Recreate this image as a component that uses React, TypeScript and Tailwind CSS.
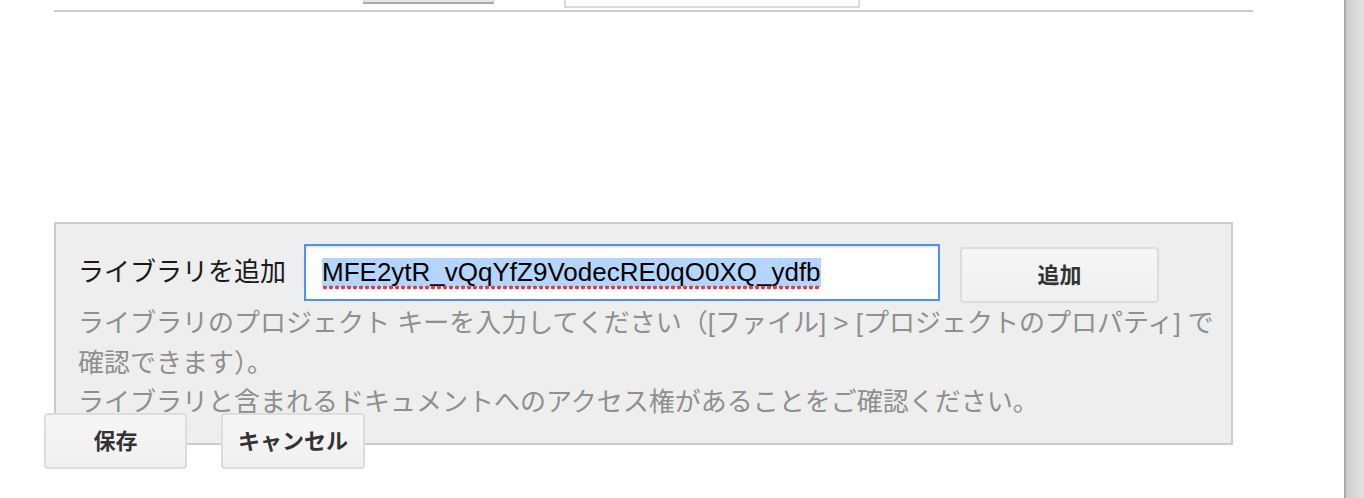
const FONT = { fontFamily: '"Liberation Sans", "Noto Sans CJK JP", sans-serif' }

function DialogButton({ label, className = '' }: { label: string; className?: string }) {
  return (
    <button
      type="button"
      className={`flex h-[56px] shrink-0 items-center justify-center rounded-[4px] border-2 border-[#dcdcdc] bg-gradient-to-b from-[#f6f6f6] to-[#f0f0f0] text-[22px] font-bold text-[#333] ${className}`}
    >
      {label}
    </button>
  )
}

export default function App() {
  return (
    <div className="flex h-[498px] w-[1364px] overflow-hidden bg-white" style={FONT}>
      <div className="flex min-w-0 flex-1 flex-col">
        {/* cut-off controls from the section above */}
        <div className="flex h-[8px] items-start pl-[363px]">
          <div className="h-[4px] w-[131px] border-x border-b-2 border-x-[#cfcfcf] border-b-[#a9a9a9] bg-[#e6e6e6]" />
          <div className="ml-[70px] h-[8px] w-[296px] border-x-2 border-b-2 border-[#dadada] bg-white" />
        </div>
        <div className="ml-[54px] mt-[2px] h-[2px] w-[1199px] bg-[#cccccc]" />

        {/* add library panel */}
        <div className="ml-[54px] mt-[210px] box-border h-[223px] w-[1179px] border-2 border-[#cccccc] bg-[#eeeeee] px-[22px] pt-[20px]">
          <div className="flex items-start">
            <label className="mt-[12px] w-[226px] shrink-0 text-[26px] leading-[32px] text-[#1a1a1a]">
              ライブラリを追加
            </label>
            <div className="flex h-[57px] w-[636px] shrink-0 items-center border-2 border-[#4d90fe] bg-white pl-[16px] shadow-[inset_0_1px_2px_rgba(0,0,0,0.15)]">
              <span className="relative bg-[#b4d5fe] text-[26px] leading-[29px] text-black">
                MFE2ytR_vQqYfZ9VodecRE0qO0XQ_ydfb
                {/* spellcheck squiggle */}
                <span className="absolute -bottom-[3px] left-0 h-[5px] w-full bg-[radial-gradient(circle,#e53b3b_1.7px,transparent_2.2px)] bg-[length:6px_5px] bg-repeat-x" />
              </span>
            </div>
            <DialogButton label="追加" className="ml-[20px] mt-[3px] w-[199px]" />
          </div>
          <p className="w-[1150px] text-[26px] leading-[40px] text-[#8f8f8f]">
            ライブラリのプロジェクト キーを入力してください（[ファイル] &gt; [プロジェクトのプロパティ] で確認できます）。
          </p>
          <p className="text-[26px] leading-[39px] text-[#8f8f8f]">
            ライブラリと含まれるドキュメントへのアクセス権があることをご確認ください。
          </p>
        </div>

        {/* dialog actions */}
        <div className="relative z-10 -mt-[32px] ml-[44px] flex gap-[34px]">
          <DialogButton label="保存" className="w-[143px]" />
          <DialogButton label="キャンセル" className="w-[144px]" />
        </div>
      </div>

      {/* window scrollbar */}
      <div className="h-full w-[20px] shrink-0 border-l-2 border-[#a9a9a9] bg-gradient-to-r from-[#cdcdcd] to-[#e3e3e3]" />
    </div>
  )
}
